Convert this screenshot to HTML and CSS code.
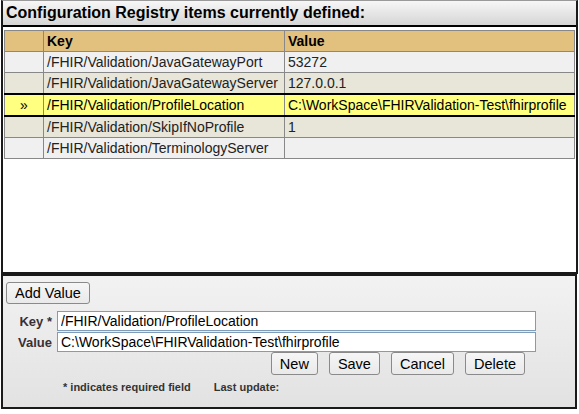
FILE: index.html
```html
<!DOCTYPE html>
<html>
<head>
<meta charset="utf-8">
<link rel="stylesheet" href="styles.css">
</head>
<body>
<div class="list-panel">
  <div class="title">Configuration Registry items currently defined:</div>
  <div class="list-body">
    <table class="grid">
      <colgroup><col class="c-sel"><col class="c-key"><col class="c-val"></colgroup>
      <thead><tr><th></th><th>Key</th><th>Value</th></tr></thead>
      <tbody>
        <tr class="odd"><td></td><td>/FHIR/Validation/JavaGatewayPort</td><td>53272</td></tr>
        <tr class="even"><td></td><td>/FHIR/Validation/JavaGatewayServer</td><td>127.0.0.1</td></tr>
        <tr class="selected"><td class="mark">»</td><td>/FHIR/Validation/ProfileLocation</td><td>C:\WorkSpace\FHIRValidation-Test\fhirprofile</td></tr>
        <tr class="even"><td></td><td>/FHIR/Validation/SkipIfNoProfile</td><td>1</td></tr>
        <tr class="odd"><td></td><td>/FHIR/Validation/TerminologyServer</td><td></td></tr>
      </tbody>
    </table>
  </div>
</div>
<div class="edit-panel">
  <button class="btn add">Add Value</button>
  <div class="form">
    <label class="lbl">Key *</label>
    <input class="field" value="/FHIR/Validation/ProfileLocation">
    <label class="lbl">Value</label>
    <input class="field" value="C:\WorkSpace\FHIRValidation-Test\fhirprofile">
    <div class="actions">
      <button class="btn">New</button>
      <button class="btn">Save</button>
      <button class="btn">Cancel</button>
      <button class="btn">Delete</button>
    </div>
  </div>
  <div class="footer"><span>* indicates required field</span><span>Last update:</span></div>
</div>
</body>
</html>
```

FILE: styles.css
```css
body {
  margin: 0;
  background: #fff;
  font-family: "Liberation Sans", Arial, sans-serif;
  color: #000;
}

.list-panel {
  margin-left: 1px;
  width: 577px;
  height: 274px;
  box-sizing: border-box;
  border: 2px solid #1a1a1a;
  border-top: 1px solid #9a9a9a;
  background: #fff;
}

.title {
  height: 24px;
  line-height: 24px;
  padding-left: 3px;
  border-bottom: 2px solid #000;
  background: linear-gradient(#f7f7f7, #d5d5d5);
  font-weight: bold;
  font-size: 16px;
  white-space: nowrap;
}

.list-body {
  padding: 3px 0 0 1px;
}

.grid {
  border-collapse: collapse;
  table-layout: fixed;
  width: 570px;
  font-size: 14px;
}

.c-sel { width: 39px; }
.c-key { width: 241px; }
.c-val { width: 290px; }

.grid th,
.grid td {
  border: 1px solid #888;
  padding: 0 0 0 3px;
  line-height: 20px;
  height: 20px;
  text-align: left;
  white-space: nowrap;
  overflow: hidden;
  color: #222;
}

.grid th {
  background: #e2c17f;
  font-weight: bold;
  color: #000;
}

.grid tr.odd td { background: #f0f0f0; }
.grid tr.even td { background: #e8e5d9; }

.grid tr.selected td {
  background: #ffff80;
  border-top: 2px solid #000;
  border-bottom: 2px solid #000;
  color: #000;
}

.grid td.mark {
  text-align: center;
  padding: 0;
}

.edit-panel {
  margin-left: 1px;
  width: 576px;
  height: 135px;
  box-sizing: border-box;
  border: 2px solid #1a1a1a;
  background: linear-gradient(#f2f2f2, #e2e2e2);
  padding: 6px 0 0 3px;
}

.btn {
  font-family: "Liberation Sans", Arial, sans-serif;
  font-size: 14.5px;
  color: #000;
  height: 23px;
  padding: 0 8px;
  border: 1px solid #8a8a8a;
  border-radius: 3px;
  background: linear-gradient(#f6f6f6, #e9e9e9);
  margin: 0;
}

.btn.add {
  height: 22px;
  padding: 0 8px;
  display: block;
}

.form {
  margin-top: 7px;
  display: grid;
  grid-template-columns: 47px 479px;
  column-gap: 4px;
  row-gap: 1px;
  align-items: center;
}

.lbl {
  text-align: right;
  padding-right: 1px;
  font-weight: bold;
  font-size: 13px;
  color: #3a3036;
}

.field {
  box-sizing: border-box;
  height: 20px;
  width: 479px;
  margin: 0;
  padding: 0 3px;
  border: 1px solid #7f9db9;
  background: #fff;
  font-family: "Liberation Sans", Arial, sans-serif;
  font-size: 14px;
  color: #000;
  outline: none;
}

.actions {
  grid-column: 2;
  display: flex;
  justify-content: flex-end;
  gap: 11px;
  padding-right: 11px;
  margin-top: -1px;
}

.footer {
  margin-top: 6px;
  padding-left: 57px;
  display: flex;
  gap: 23px;
  font-size: 11px;
  line-height: 13px;
  font-weight: bold;
  color: #333;
}
```
